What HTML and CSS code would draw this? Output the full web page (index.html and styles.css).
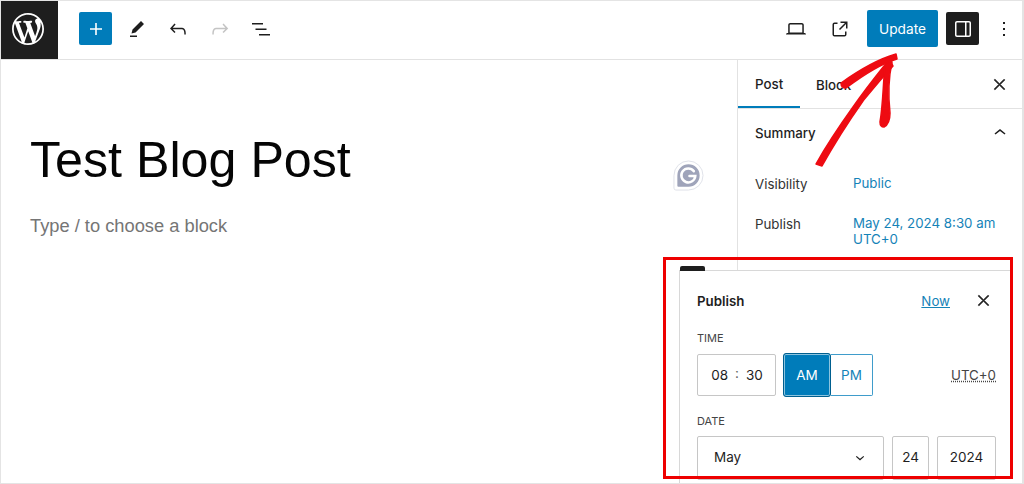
FILE: index.html
```html
<!DOCTYPE html>
<html lang="en">
<head>
<meta charset="utf-8">
<title>Test Blog Post</title>
<link rel="stylesheet" href="styles.css">
</head>
<body>
<div class="app">
  <header class="topbar">
    <div class="logo">
      <svg viewBox="0 0 20 20" width="32" height="32"><path fill="#fff" d="M20 10c0-5.51-4.49-10-10-10C4.48 0 0 4.49 0 10c0 5.52 4.48 10 10 10 5.51 0 10-4.48 10-10zM7.78 15.37L4.37 6.22c.55-.02 1.17-.08 1.17-.08.5-.06.44-1.13-.06-1.11 0 0-1.45.11-2.37.11-.18 0-.37 0-.58-.01C4.12 2.69 6.87 1.11 10 1.11c2.33 0 4.45.87 6.05 2.34-.68-.11-1.65.39-1.65 1.58 0 .74.45 1.36.9 2.1.35.61.55 1.36.55 2.46 0 1.49-1.4 5-1.4 5l-3.03-8.37c.54-.02.82-.17.82-.17.5-.05.44-1.25-.06-1.22 0 0-1.44.12-2.38.12-.87 0-2.33-.12-2.33-.12-.5-.03-.56 1.2-.06 1.22l.92.08 1.26 3.41zM17.41 10c.24-.64.74-1.87.43-4.25.7 1.29 1.05 2.71 1.05 4.25 0 3.29-1.73 6.24-4.4 7.78.97-2.59 1.94-5.2 2.92-7.78zM6.1 18.09C3.12 16.65 1.11 13.53 1.11 10c0-1.3.23-2.48.72-3.59C3.25 10.3 4.67 14.2 6.1 18.09zm4.03-6.63l2.58 6.98c-.86.29-1.76.45-2.71.45-.79 0-1.57-.11-2.29-.33.81-2.38 1.62-4.74 2.42-7.1z"/></svg>
    </div>
    <div class="tools">
      <span class="square blue"><svg class="ic" viewBox="0 0 24 24"><path fill="#fff" d="M18 11.2h-5.2V6h-1.6v5.2H6v1.6h5.2V18h1.6v-5.2H18z"/></svg></span>
      <span class="tool"><svg class="ic" viewBox="0 0 24 24"><path d="m19 7-3-3-8.5 8.5-1 4 4-1L19 7Zm-7 11.5H5V20h7v-1.5Z"/></svg></span>
      <span class="tool"><svg class="ic" viewBox="0 0 24 24"><path d="M18.3 11.7c-.6-.6-1.4-.9-2.3-.9H6.7l2.9-3.3-1.1-1-4.5 5L8.5 16l1-1-2.7-2.7H16c.5 0 .9.2 1.3.5 1 1 1 3.4 1 4.5v.3h1.5v-.2c0-1.5 0-4.3-1.5-5.7z"/></svg></span>
      <span class="tool faded"><svg class="ic" viewBox="0 0 24 24"><path d="M15.6 6.5l-1.1 1 2.9 3.3H8c-.9 0-1.7.3-2.3.9-1.4 1.5-1.4 4.2-1.4 5.6v.2h1.5v-.3c0-1.1 0-3.5 1-4.5.3-.3.7-.5 1.3-.5h9.2L14.5 15l1.1 1.1 4.6-4.6-4.6-5z"/></svg></span>
      <span class="tool"><svg class="ic" viewBox="0 0 24 24"><path d="M3 6h11v1.5H3V6Zm3.5 5.5h11V13h-11v-1.5ZM21 17H10v1.5h11V17Z"/></svg></span>
    </div>
    <div class="actions">
      <span class="tool wide"><svg class="ic" viewBox="0 0 24 24"><path d="M20.5 16h-.7V8c0-1.1-.9-2-2-2H6.2c-1.1 0-2 .9-2 2v8h-.7c-.8 0-1.5.7-1.5 1.5h20c0-.8-.7-1.5-1.5-1.5zM5.7 8c0-.3.2-.5.5-.5h11.6c.3 0 .5.2.5.5v7.6H5.7V8z"/></svg></span>
      <span class="tool wide"><svg class="ic" viewBox="0 0 24 24"><path d="M19.5 4.5h-7V6h4.44l-5.97 5.97 1.06 1.06L18 7.06v4.44h1.5v-7Zm-13 1a2 2 0 0 0-2 2v10a2 2 0 0 0 2 2h10a2 2 0 0 0 2-2v-3H17v3a.5.5 0 0 1-.5.5h-10a.5.5 0 0 1-.5-.5v-10a.5.5 0 0 1 .5-.5h3V5.5h-3Z"/></svg></span>
      <span class="update">Update</span>
      <span class="square dark"><svg class="ic" viewBox="0 0 24 24"><path fill="#fff" fill-rule="evenodd" d="M18 4H6c-1.1 0-2 .9-2 2v12c0 1.1.9 2 2 2h12c1.1 0 2-.9 2-2V6c0-1.1-.9-2-2-2zm-4 14.5H6c-.3 0-.5-.2-.5-.5V6c0-.3.2-.5.5-.5h8v13zm4.5-.5c0 .3-.2.5-.5.5h-2.5v-13H18c.3 0 .5.2.5.5v12z"/></svg></span>
      <span class="more"><svg class="ic" viewBox="0 0 24 24"><path d="M13 19h-2v-2h2v2zm0-6h-2v-2h2v2zm0-6h-2V5h2v2z"/></svg></span>
    </div>
  </header>
  <div class="body">
    <main class="editor">
      <h1 class="title">Test Blog Post</h1>
      <p class="hint">Type / to choose a block</p>
    </main>
    <aside class="sidebar">
      <div class="tabs">
        <span class="tab active">Post</span>
        <span class="tab">Block</span>
        <svg class="ic close tabs-close" viewBox="0 0 24 24"><path d="m13.06 12 6.47-6.47-1.06-1.06L12 10.94 5.53 4.47 4.47 5.53 10.94 12l-6.47 6.47 1.06 1.06L12 13.06l6.47 6.47 1.06-1.06L13.06 12Z"/></svg>
      </div>
      <div class="summary">
        <span>Summary</span>
        <svg class="ic" viewBox="0 0 24 24"><path d="M6.5 12.4L12 8l5.5 4.4-.9 1.2L12 10l-4.5 3.6-1-1.2z"/></svg>
      </div>
      <div class="row vis"><span class="key">Visibility</span><span class="val">Public</span></div>
      <div class="row"><span class="key">Publish</span><span class="val">May 24, 2024 8:30 am<br>UTC+0</span></div>
    </aside>
  </div>

  <svg class="grammarly" viewBox="0 0 32 32">
    <path fill="#fff" stroke="#dfe1e8" d="M16 1a15 15 0 1 1 0 30H3a2 2 0 0 1-2-2V16A15 15 0 0 1 16 1Z"/>
    <path fill="#9fa4ba" d="M16 4.500a11.500 11.500 0 1 1 0 23H5.500a1 1 0 0 1-1-1V16A11.500 11.500 0 0 1 16 4.500Z"/>
    <path fill="none" stroke="#fff" stroke-width="2.600" stroke-linecap="round" d="M21.500 11.500A7.200 7.200 0 1 0 23 16.500h-6"/>
  </svg>

  <section class="popover">
    <span class="pop-tab"></span>
    <div class="pop-head">
      <strong>Publish</strong>
      <a class="now">Now</a>
      <svg class="ic close" viewBox="0 0 24 24"><path d="m13.06 12 6.47-6.47-1.06-1.06L12 10.94 5.53 4.47 4.47 5.53 10.94 12l-6.47 6.47 1.06 1.06L12 13.06l6.47 6.47 1.06-1.06L13.06 12Z"/></svg>
    </div>
    <div class="label">TIME</div>
    <div class="time-row">
      <div class="field time"><span>08</span><i>:</i><span>30</span></div>
      <div class="ampm"><span class="am">AM</span><span class="pm">PM</span></div>
      <span class="tz">UTC+0</span>
    </div>
    <div class="label date">DATE</div>
    <div class="date-row">
      <div class="field month"><span>May</span><svg viewBox="0 0 24 24" width="18" height="18"><path fill="#1e1e1e" d="M17.500 11.600 16.500 10.500 12 14.300 7.600 10.500 6.500 11.600 12 16.500z"/></svg></div>
      <div class="field day">24</div>
      <div class="field year">2024</div>
    </div>
  </section>

  <div class="highlight"></div>
  <svg class="arrow" viewBox="0 0 1024 484" width="1024" height="484">
    <path d="M816 164C825 148 838 128 853 107C862 94 872 81 884 66L890 60L893 66C880 80 872 90 863 101C851 118 838 137 822 166Z"/>
    <path d="M887 60L892 62C888 80 888 95 890 113Q890 124 884 127Q880 127 880 122C883 105 883 85 885 65Z"/>
    <path d="M841 83C855 73 875 60 896 54L897 59C880 64 862 76 846 88Q841 88 841 83Z"/>
  </svg>
</div>
</body>
</html>
```
FILE: styles.css
```css
* { box-sizing: border-box; }
html, body { margin: 0; height: 484px; overflow: hidden; background: #fff; }
body { font-family: Inter, "Liberation Sans", sans-serif; color: #1e1e1e; font-size: 13.300px; }

.app {
  position: relative;
  width: 1024px;
  height: 484px;
  border: 1px solid #e4e4e4;
  border-right-width: 2px;
  overflow: hidden;
  display: flex;
  flex-direction: column;
}
.ic { width: 24px; height: 24px; display: block; fill: #1e1e1e; }
.close { width: 17px; height: 17px; stroke: #1e1e1e; stroke-width: 1; }

.topbar {
  height: 59px;
  flex: none;
  display: flex;
  align-items: center;
  border-bottom: 1px solid #e2e2e2;
}
.logo {
  width: 57px;
  height: 58px;
  padding: 0 3px 2px 0;
  background: #1e1e1e;
  display: flex;
  align-items: center;
  justify-content: center;
}
.tools { display: flex; align-items: center; margin-left: 21px; padding-bottom: 3px; }
.square {
  width: 33px;
  height: 33px;
  border-radius: 2px;
  display: flex;
  align-items: center;
  justify-content: center;
}
.blue { background: #007cba; margin-right: 4px; }
.dark { background: #1e1e1e; margin-left: 8px; }
.tool { width: 41.500px; height: 33px; display: flex; align-items: center; justify-content: center; }
.faded .ic { fill: #c4c4c4; }
.actions { display: flex; align-items: center; margin-left: auto; margin-right: 6px; padding-bottom: 3px; }
.wide { width: 44px; }
.update {
  width: 71px;
  height: 37px;
  margin-left: 5px;
  background: #007cba;
  color: #fff;
  border-radius: 2px;
  display: flex;
  align-items: center;
  justify-content: center;
  font-size: 13.700px;
}
.more { margin-left: 13px; }

.body { flex: 1; display: flex; min-height: 0; }
.editor { flex: 1; padding: 70px 0 0 29px; }
.title {
  margin: 0;
  font-family: "Liberation Sans", Arial, sans-serif;
  font-size: 50.200px;
  line-height: 60px;
  font-weight: 400;
  color: #050505;
}
.hint {
  margin: 24px 0 0;
  font-family: "Liberation Sans", Arial, sans-serif;
  font-size: 18.300px;
  line-height: 24px;
  color: #757575;
}

.sidebar { width: 285px; flex: none; border-left: 1px solid #e2e2e2; }
.tabs {
  height: 49px;
  display: flex;
  align-items: center;
  border-bottom: 1px solid #e2e2e2;
}
.tab { height: 48px; display: flex; align-items: center; padding: 1px 0 0 17px; font-weight: 500; }
.tab.active { width: 62px; margin-right: -1px; border-bottom: 2px solid #007cba; }
.tabs-close { margin-left: auto; margin-right: 14.500px; }
.summary {
  display: flex;
  justify-content: space-between;
  align-items: center;
  height: 48px;
  padding: 0 10px 0 17px;
  font-weight: 500;
}
.row { display: flex; padding: 0 17px; line-height: 16px; }
.vis { margin: 18px 0 23px; }
.key { width: 98px; flex: none; color: #333; padding-top: 1px; }
.val { color: #1583b8; }

.grammarly { position: absolute; left: 672px; top: 159px; width: 31px; height: 31px; }

.popover {
  position: absolute;
  left: 678px;
  top: 269px;
  width: 331px;
  height: 240px;
  background: #fff;
  border: 1px solid #d8d8d8;
  border-right: 0;
  padding: 0 14px 0 17px;
}
.pop-tab {
  position: absolute;
  left: 0;
  top: -5px;
  width: 25px;
  height: 5px;
  background: #1e1e1e;
  border-radius: 2px 2px 0 0;
}
.pop-head { display: flex; align-items: center; height: 59px; padding-right: 4.500px; }
.pop-head strong { font-weight: 600; }
.now { margin-left: auto; color: #1583b8; text-decoration: underline; }
.pop-head .ic { margin-left: 24.500px; }
.label { font-size: 11px; line-height: 16px; color: #444; }
.time-row { display: flex; align-items: center; margin-top: 7px; height: 44px; }
.field {
  border: 1px solid #c6c6c6;
  border-radius: 2px;
  display: flex;
  align-items: center;
  justify-content: center;
  font-size: 13.500px;
}
.time { width: 79px; height: 42px; gap: 7px; padding-left: 1px; }
.time i { font-style: normal; color: #666; position: relative; top: -2px; }
.ampm { display: flex; margin-left: 7px; height: 44px; font-size: 13.500px; }
.am {
  width: 48px;
  background: #007cba;
  color: #fff;
  border: 1px solid #005f8f;
  border-radius: 3px;
  box-shadow: inset 0 0 0 1px #8cc4df;
  display: flex;
  align-items: center;
  justify-content: center;
  position: relative;
}
.pm {
  width: 42px;
  margin-top: 1px;
  margin-bottom: 1px;
  color: #1583b8;
  border: 1.500px solid #3f9ccb;
  border-left: 0;
  border-radius: 0 2px 2px 0;
  display: flex;
  align-items: center;
  justify-content: center;
}
.tz { margin-left: auto; text-decoration: underline dotted; color: #444; }
.label.date { margin-top: 16px; }
.date-row { display: flex; margin-top: 7px; gap: 8px; }
.date-row .field { height: 44px; padding-bottom: 2px; }
.month { width: 187px; justify-content: space-between; padding: 0 14px 0 16px; }
.day { width: 37px; }
.year { width: 59px; }

.highlight {
  position: absolute;
  left: 662px;
  top: 256px;
  width: 350px;
  height: 222px;
  border: 3px solid #ee0000;
}
.arrow { position: absolute; left: -1px; top: -1px; pointer-events: none; }
.arrow path { fill: #ee0b12; stroke: #ee0b12; stroke-width: 1.500; stroke-linejoin: round; }
```
